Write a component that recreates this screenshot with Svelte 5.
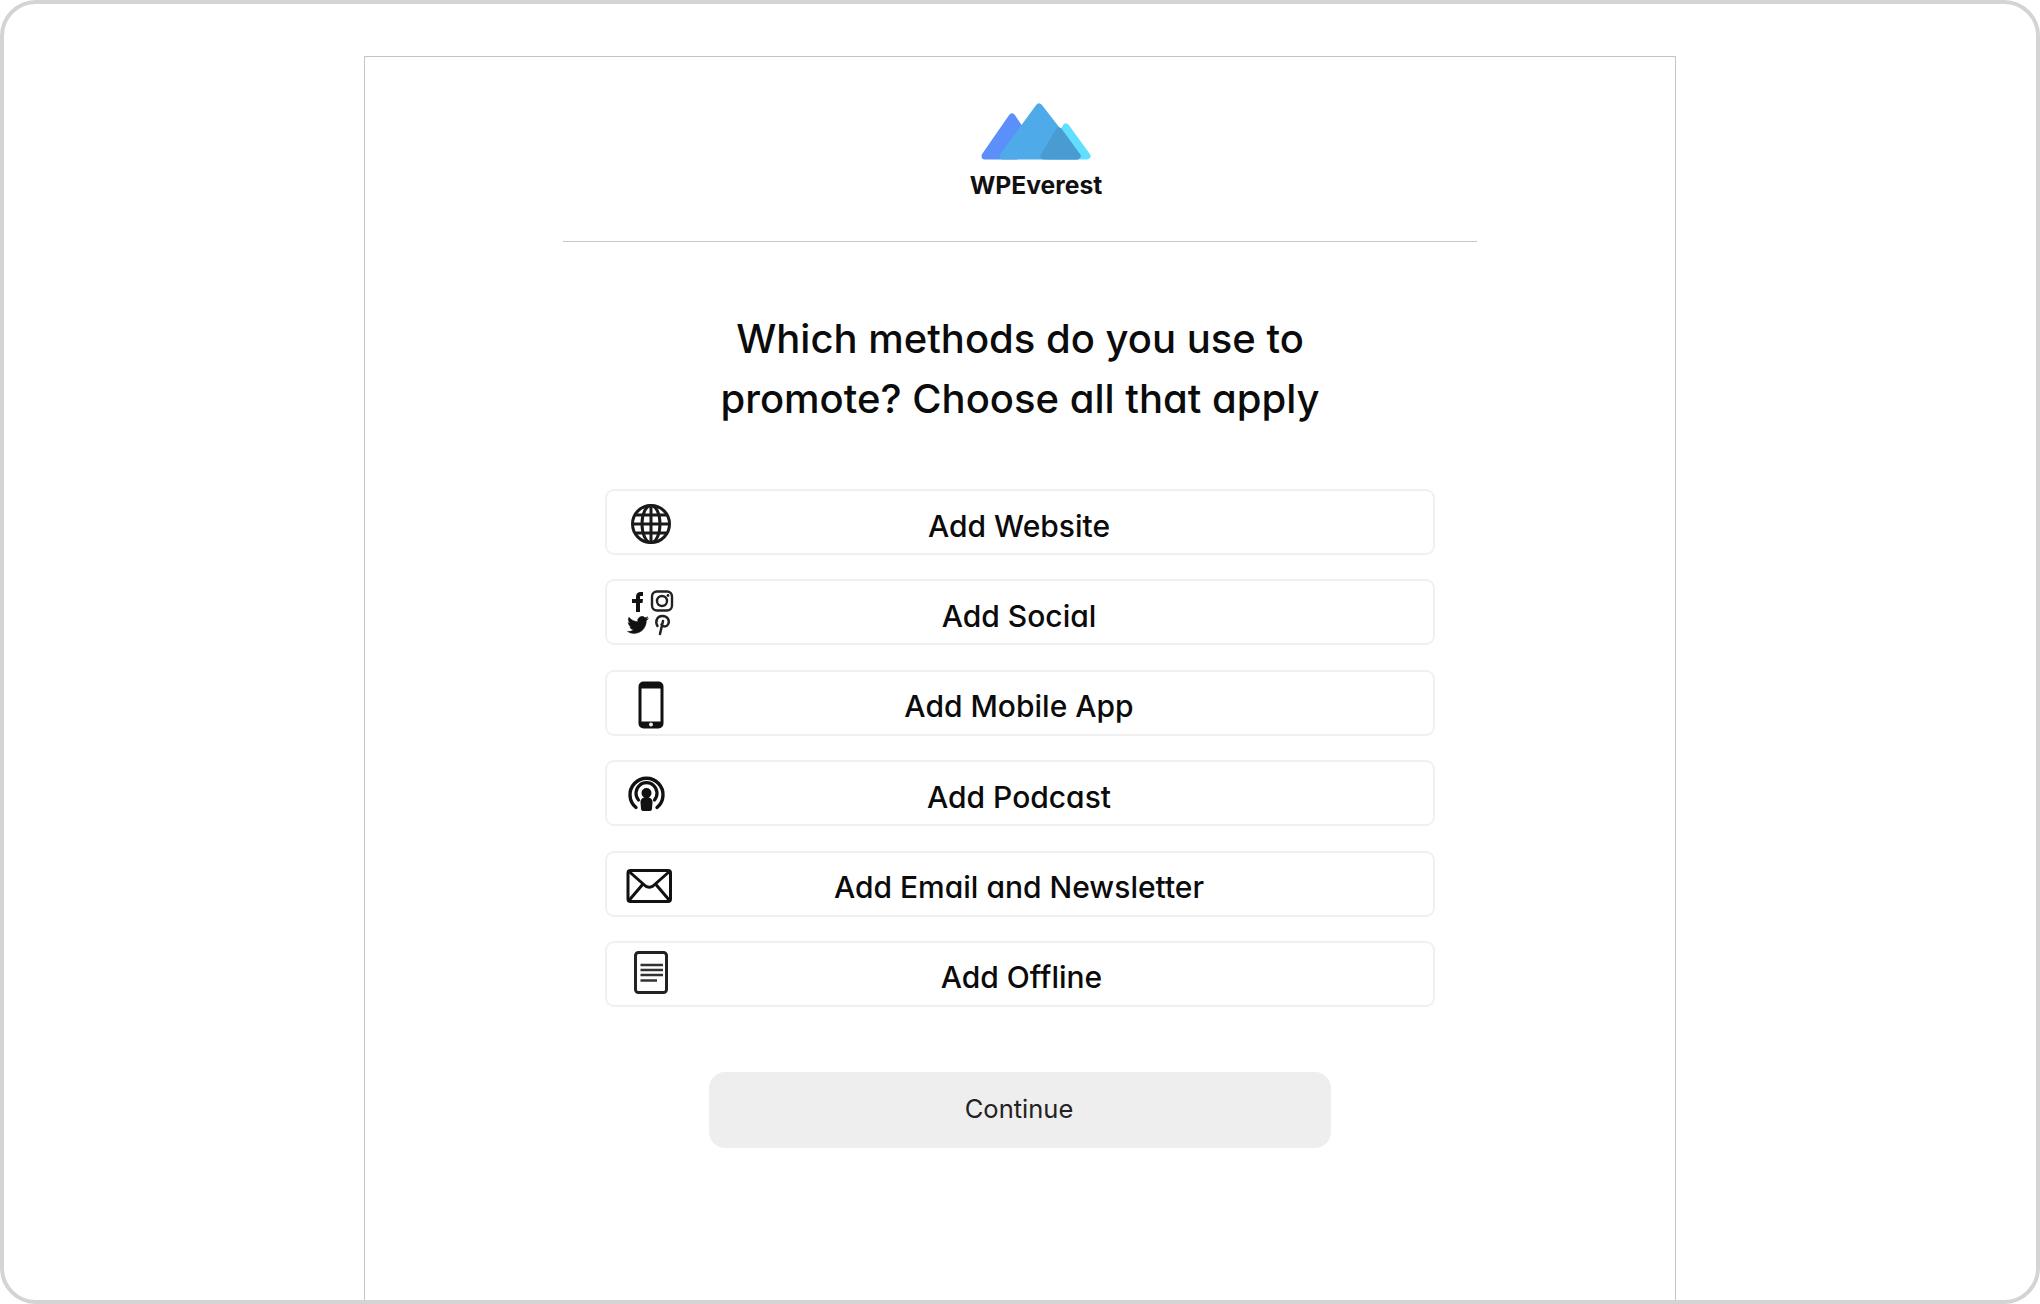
<script>
  const rows = [
    { label: 'Add Website', icon: 'globe' },
    { label: 'Add Social', icon: 'social' },
    { label: 'Add Mobile App', icon: 'phone' },
    { label: 'Add Podcast', icon: 'podcast' },
    { label: 'Add Email and Newsletter', icon: 'mail' },
    { label: 'Add Offline', icon: 'doc' }
  ];
</script>

<div class="frame">
  <main class="card">
    <header class="brand">
      <svg class="logo" width="116" height="64" viewBox="978 99 116 64" aria-hidden="true">
        <g stroke-linejoin="round" stroke-width="7">
          <path d="M1012 116 L1028 140 L1016 155 L985 155 Z" fill="#5b8ff9" stroke="#5b8ff9"/>
          <path d="M1066 126 L1087 155 L1050 155 Z" fill="#62dfff" stroke="#62dfff"/>
          <path d="M1039 106 L1077 155 L1003 155 Z" fill="#4eaae8" stroke="#4eaae8"/>
          <path d="M1059 130 L1077 155 L1044 155 Z" fill="#4b9bd3" stroke="#4b9bd3"/>
        </g>
      </svg>
      <div class="brand-name">WPEverest</div>
    </header>
    <hr class="divider" />
    <h1>Which methods do you use to<br />promote? Choose all that apply</h1>
    <ul class="rows">
      {#each rows as row}
        <li class="row">
          <svg class="icon" width="90" height="65" viewBox="0 0 90 65" aria-hidden="true">
            {#if row.icon === 'globe'}
              <g fill="none" stroke="#1a1a1a" stroke-width="3">
                <circle cx="46" cy="34" r="18.500"/>
                <ellipse cx="46" cy="34" rx="9" ry="18.500"/>
                <path d="M46 15.400V52.600M27.400 34H64.600M30 25H62M30 43H62"/>
              </g>
            {:else if row.icon === 'social'}
              <path fill="#111" d="M31 32V23H27V19H31V16.500C31 13.500 33 12 35.500 12H38V16H36C35 16 35 16.500 35 17.500V19H38L37.500 23H35V32Z"/>
              <g fill="none" stroke="#222" stroke-width="2.400">
                <rect x="47" y="11.500" width="20" height="19" rx="5"/>
                <circle cx="57" cy="21" r="5"/>
              </g>
              <circle cx="63" cy="15.500" r="1.400" fill="#222"/>
              <g transform="translate(22.500 34.500) scale(.87)">
                <path fill="#111" stroke="#111" stroke-width=".6" d="M23.953 4.57a10 10 0 01-2.825.775 4.958 4.958 0 002.163-2.723c-.951.555-2.005.959-3.127 1.184a4.92 4.92 0 00-8.384 4.482C7.69 8.095 4.067 6.13 1.64 3.162a4.822 4.822 0 00-.666 2.475c0 1.71.87 3.213 2.188 4.096a4.904 4.904 0 01-2.228-.616v.06a4.923 4.923 0 003.946 4.827 4.996 4.996 0 01-2.212.085 4.936 4.936 0 004.604 3.417 9.867 9.867 0 01-6.102 2.105c-.39 0-.779-.023-1.17-.067a13.995 13.995 0 007.557 2.209c9.053 0 13.998-7.496 13.998-13.985 0-.21 0-.42-.015-.63A9.935 9.935 0 0024 4.590z"/>
              </g>
              <path fill="none" stroke="#222" stroke-width="2.500" stroke-linecap="round" d="M52.500 46C50 42 51.500 36 57.500 36C63 36 65 41 63 44.500C61.500 47 57.500 47 56.500 44.500M58 41L55 54"/>
            {:else if row.icon === 'phone'}
              <rect x="35" y="12" width="22" height="44" rx="3.500" fill="none" stroke="#111" stroke-width="3"/>
              <path fill="#111" d="M35 16C35 13 37 12 39 12H53C55 12 57 13 57 16V17.500H35ZM35 50.500H57V52C57 55 55 56 53 56H39C37 56 35 55 35 52Z"/>
              <circle cx="46" cy="53.500" r="2" fill="#eee"/>
            {:else if row.icon === 'podcast'}
              <g fill="none" stroke="#111" stroke-linecap="round">
                <path stroke-width="3.400" d="M31 46.500A16.500 16.500 0 1 1 52 46.500"/>
                <path stroke-width="3.200" d="M33.500 39A10.500 10.500 0 1 1 49.500 39"/>
              </g>
              <circle cx="41.500" cy="32" r="5" fill="#111"/>
              <path fill="#111" d="M35.500 41C35.500 37.500 38.500 36 41.500 36C44.500 36 47.500 37.500 47.500 41L47 48C46.800 49.500 45.500 50 44.500 50H38.500C37.500 50 36.200 49.500 36 48Z"/>
            {:else if row.icon === 'mail'}
              <g fill="none" stroke="#111" stroke-width="3" stroke-linejoin="round">
                <rect x="23" y="18.500" width="42.500" height="31" rx="2.500"/>
                <path d="M23.500 19L40.500 34C42.500 35.500 46 35.500 48 34L65 19M23.500 49L38 32M65 49L50.500 32"/>
              </g>
            {:else}
              <rect x="30.500" y="10.500" width="31" height="40" rx="3" fill="none" stroke="#222" stroke-width="3"/>
              <path fill="none" stroke="#333" stroke-width="2.500" d="M35.500 23H58M35.500 28H58M35.500 33H58M35.500 38.500H52"/>
            {/if}
          </svg>
          <span class="label" class:nudge={row.icon === 'doc'}>{row.label}</span>
        </li>
      {/each}
    </ul>
    <button class="continue" type="button">Continue</button>
  </main>
</div>

<style>
  :global(body) {
    margin: 0;
    background: #fff;
  }
  .frame {
    box-sizing: border-box;
    width: 2040px;
    height: 1304px;
    border: 4px solid #d4d4d4;
    border-radius: 36px;
    padding-top: 52px;
    overflow: hidden;
    font-family: Inter, "Liberation Sans", sans-serif;
    font-feature-settings: "cv11" 1;
    color: #0b0b0b;
  }
  .card {
    box-sizing: border-box;
    width: 1312px;
    height: 1248px;
    margin: 0 auto;
    border: 1px solid #c4c4c4;
    border-bottom: none;
    display: flex;
    flex-direction: column;
    align-items: center;
  }
  .brand {
    margin-left: 32px;
    margin-top: 43px;
    display: flex;
    flex-direction: column;
    align-items: center;
  }
  .logo {
    display: block;
  }
  .brand-name {
    font-size: 24.700px;
    line-height: 30px;
    font-weight: 700;
    color: #111;
    margin-top: 6px;
    font-feature-settings: normal;
  }
  .divider {
    width: 914px;
    height: 1px;
    border: 0;
    background: #c8c8c8;
    margin: 41px 0 0;
  }
  h1 {
    margin: 67px 0 0;
    font-size: 40px;
    line-height: 60px;
    font-weight: 500;
    text-align: center;
  }
  .rows {
    list-style: none;
    margin: 60px 0 0;
    padding: 0;
    display: flex;
    flex-direction: column;
    gap: 24.400px;
  }
  .row {
    position: relative;
    box-sizing: border-box;
    width: 830px;
    height: 66px;
    border: 2px solid #f0f0f0;
    border-radius: 9px;
    display: flex;
    align-items: center;
    justify-content: center;
    padding: 7px 2px 0 0;
  }
  .icon {
    position: absolute;
    left: -2px;
    top: -1px;
  }
  .label {
    font-size: 30px;
    line-height: 40px;
    font-weight: 500;
    color: #0b0b0b;
  }
  .nudge {
    margin-left: 5px;
  }
  .continue {
    box-sizing: border-box;
    width: 622px;
    height: 76px;
    margin-top: 65px;
    padding: 0 2px 3px 0;
    border: 0;
    border-radius: 16px;
    background: #eeeeee;
    color: #222;
    font: inherit;
    font-feature-settings: inherit;
    font-size: 25.500px;
  }
</style>
